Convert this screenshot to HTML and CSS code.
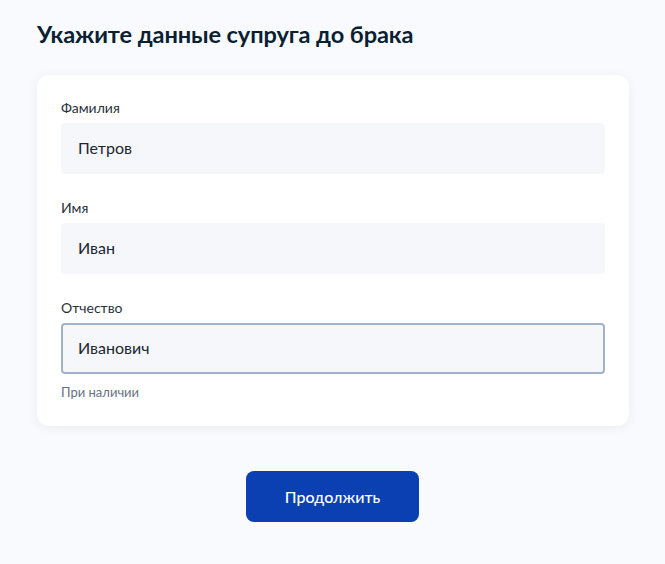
FILE: index.html
```html
<!DOCTYPE html>
<html lang="ru">
<head>
<meta charset="utf-8">
<link rel="stylesheet" href="styles.css">
</head>
<body>
<main class="page">
  <h1 class="title">Укажите данные супруга до брака</h1>
  <section class="card">
    <div class="field">
      <label class="label">Фамилия</label>
      <div class="input">Петров</div>
    </div>
    <div class="field">
      <label class="label">Имя</label>
      <div class="input">Иван</div>
    </div>
    <div class="field">
      <label class="label">Отчество</label>
      <div class="input input-focus">Иванович</div>
      <div class="hint">При наличии</div>
    </div>
  </section>
  <div class="actions">
    <button class="btn">Продолжить</button>
  </div>
</main>
</body>
</html>
```
FILE: styles.css
```css
* { box-sizing: border-box; }
html, body { margin: 0; padding: 0; }
body {
  background: #f8fafd;
  font-family: Lato, "Noto Sans", sans-serif;
  color: #0b1f33;
}
.page {
  width: 665px;
  height: 564px;
  padding: 18px 36px 0 37px;
}
.title {
  margin: 0 0 25px;
  font-size: 23.6px;
  line-height: 32px;
  font-weight: 700;
  letter-spacing: -0.1px;
  color: #0b1f33;
}
.card {
  background: #ffffff;
  border-radius: 12px;
  box-shadow: 0 2px 12px rgba(11, 31, 51, 0.06);
  padding: 23px 24px 25px;
  display: flex;
  flex-direction: column;
  gap: 24px;
}
.field { display: flex; flex-direction: column; }
.label {
  font-size: 14px;
  line-height: 20px;
  color: #27313c;
  margin-bottom: 5px;
}
.input {
  height: 51px;
  background: #f5f7fa;
  border-radius: 4px;
  border: 2px solid transparent;
  padding: 0 15px 2px;
  display: flex;
  align-items: center;
  font-size: 16px;
  color: #1d2630;
}
.input-focus {
  border-color: #a4b2c8;
}
.hint {
  margin-top: 9px;
  font-size: 13px;
  line-height: 18px;
  color: #66727f;
}
.actions {
  display: flex;
  justify-content: center;
  margin-top: 45px;
}
.btn {
  width: 173px;
  height: 51px;
  margin-left: -1px;
  border: 0;
  border-radius: 8px;
  background: #0b40b3;
  color: #ffffff;
  font-family: Lato, "Noto Sans", sans-serif;
  font-size: 16px;
  font-weight: 500;
}
```
